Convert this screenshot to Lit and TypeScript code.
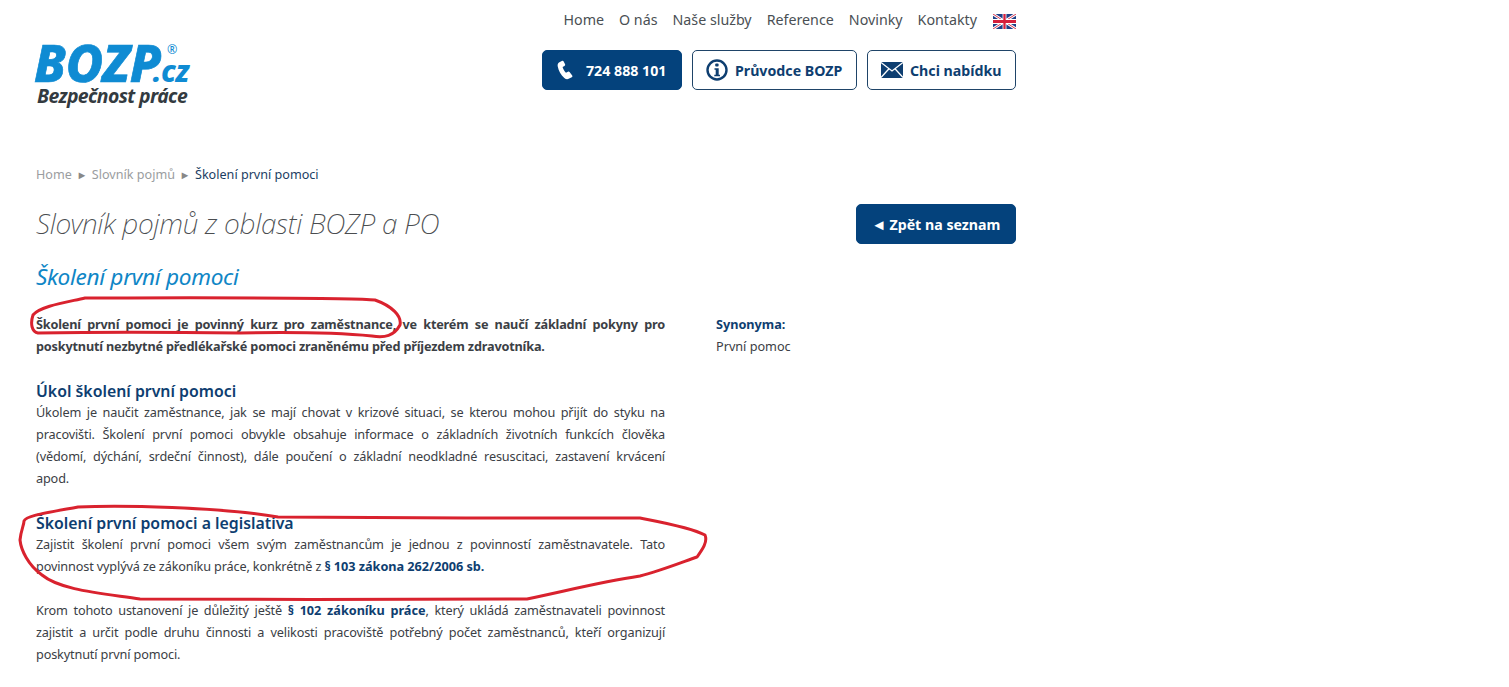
import { LitElement, html, css } from "lit";
import { customElement } from "lit/decorators.js";

@customElement("app-root")
export class AppRoot extends LitElement {
  static styles = css`
    :host { display: block; position: relative; height: 687px; overflow: hidden; background: #fff; font-family: "Noto Sans", sans-serif; color: #333a40; }
    a { color: inherit; text-decoration: none; }
    .page { width: 980px; margin-left: 36px; display: flex; flex-direction: column; }
    header { display: flex; justify-content: space-between; height: 146px; }
    .logo { display: flex; flex-direction: column; margin-top: 41px; width: 160px; }
    .brand { display: flex; align-items: baseline; color: #0f8bd3; font-style: italic; font-weight: 800; line-height: 42px; height: 42px; position: relative; white-space: nowrap; margin-left: -2px; }
    .brand b { font-size: 51px; font-weight: 800; letter-spacing: -0.2px; -webkit-text-stroke: 0.7px #0f8bd3; }
    .brand i { font-size: 30px; letter-spacing: -0.6px; margin-left: -8px; }
    .brand sup { position: absolute; left: 133px; top: 2px; font-size: 12.5px; line-height: 14px; font-weight: 400; font-style: normal; }
    .tag { font-size: 19.4px; line-height: 22px; font-style: italic; font-weight: 700; color: #333a40; letter-spacing: -0.6px; margin: 2px 0 0 1px; white-space: nowrap; }
    .hright { display: flex; flex-direction: column; align-items: flex-end; }
    nav { display: flex; align-items: center; height: 40px; gap: 15px; font-size: 14.25px; color: #4a4f54; }
    nav a { position: relative; top: -1px; }
    .flag { width: 23px; height: 15px; display: block; margin-left: 1px; margin-top: 3px; }
    .btns { display: flex; gap: 10px; margin-top: 10px; }
    .btn { box-sizing: border-box; height: 40px; border-radius: 5px; border: 1px solid #1f4468; display: flex; align-items: center; font-weight: 700; font-size: 14.2px; color: #0e3e70; white-space: nowrap; }
    .btn.solid { background: #04427c; border-color: #04427c; color: #fff; }
    .b1 { width: 140px; padding-left: 13px; gap: 9px; }
    .b2 { width: 165px; padding-left: 13px; gap: 7px; }
    .b3 { width: 149px; padding-left: 13px; gap: 7px; }
    .crumbs { display: flex; align-items: center; height: 22px; margin-top: 17px; font-size: 12.6px; color: #9a9da0; }
    .crumbs .sep { width: 20px; text-align: center; font-size: 11px; color: #888; }
    .crumbs .cur { color: #1b3d63; }
    .titlebar { display: flex; justify-content: space-between; align-items: center; margin-top: 19px; height: 40px; }
    h1 { margin: -2px 0 0; font-size: 28px; font-weight: 200; font-style: italic; color: #4a4d50; letter-spacing: -0.3px; }
    .back { width: 160px; justify-content: center; gap: 3px; }
    .back .arrow { font-size: 15px; }
    h2 { margin: 13px 0 0; font-size: 22.6px; line-height: 40px; font-weight: 400; font-style: italic; color: #0f86c6; letter-spacing: -0.3px; }
    .cols { display: flex; margin-top: 16px; }
    .main { width: 629px; flex: none; font-size: 12.7px; line-height: 22px; color: #3b4045; letter-spacing: -0.15px; }
    .side { margin-left: 51px; font-size: 12.7px; line-height: 22px; color: #3b4045; letter-spacing: -0.02px; }
    .side strong { display: block; color: #0e3e70; }
    .l { display: block; text-align: justify; text-align-last: justify; }
    .l.end { text-align-last: left; }
    .lead { font-weight: 700; letter-spacing: -0.18px; }
    h3 { margin: 0; padding-top: 1px; font-size: 15.85px; line-height: 20px; font-weight: 600; color: #0e3e70; letter-spacing: 0; }
    .sec { margin-top: 23px; }
    .sec.plain { margin-top: 22px; }
    strong.k { color: #0e3e70; letter-spacing: -0.03px; }
    .marks { position: absolute; left: 0; top: 0; pointer-events: none; }
  `;
  render() {
    return html`
      <div class="page">
        <header>
          <div class="logo">
            <div class="brand"><b>BOZP</b><i>.cz</i><sup>®</sup></div>
            <div class="tag">Bezpečnost práce</div>
          </div>
          <div class="hright">
            <nav>
              <a>Home</a><a>O nás</a><a>Naše služby</a><a>Reference</a><a>Novinky</a><a>Kontakty</a>
              <svg class="flag" viewBox="0 0 60 30" preserveAspectRatio="none">
                <rect width="60" height="30" fill="#1d3f87"/>
                <path d="M0 0L60 30M60 0L0 30" stroke="#fff" stroke-width="6"/>
                <path d="M0 0L60 30M60 0L0 30" stroke="#d5203c" stroke-width="2"/>
                <path d="M30 0V30M0 15H60" stroke="#fff" stroke-width="10"/>
                <path d="M30 0V30M0 15H60" stroke="#d5203c" stroke-width="6"/>
              </svg>
            </nav>
            <div class="btns">
              <a class="btn solid b1">
                <svg width="21" height="22" viewBox="0 0 24 24" fill="#fff"><path d="M6.600 1.600 3.400 3.300C2 4.200 1.600 6 2 8c1 5 3.500 9.400 7.500 13 1.500 1.400 3.400 1.900 5 1.100l3.500-1.900c.8-.5 1-1.300.5-2l-3-3.900c-.5-.6-1.200-.8-1.900-.4l-2.200 1.300c-1.900-1.800-3.200-4-3.900-6.500l2.200-1.300c.7-.4.900-1.100.7-1.900L8.600 2.100c-.3-.7-1.200-.9-2-.5z"/></svg>
                <span>724 888 101</span>
              </a>
              <a class="btn b2">
                <svg width="22" height="22" viewBox="0 0 22 22"><circle cx="11" cy="11" r="9.500" fill="none" stroke="#0e3e70" stroke-width="2.400"/><rect x="9.200" y="4.600" width="3.400" height="3" rx="1" fill="#0e3e70"/><path d="M8.500 9.200h4.200v6.500h1.300v1.500H8.300v-1.500h1.400v-5H8.500z" fill="#0e3e70"/></svg>
                <span>Průvodce BOZP</span>
              </a>
              <a class="btn b3">
                <svg width="22" height="16" viewBox="0 0 22 16"><rect width="22" height="16" fill="#0e3e70"/><path d="M0 .5 11 9 22 .5M0 15.500 8 6.800M22 15.500 14 6.800" fill="none" stroke="#fff" stroke-width="1.300"/></svg>
                <span>Chci nabídku</span>
              </a>
            </div>
          </div>
        </header>

        <div class="crumbs"><span>Home</span><span class="sep">►</span><span>Slovník pojmů</span><span class="sep">►</span><span class="cur">Školení první pomoci</span></div>

        <div class="titlebar">
          <h1>Slovník pojmů z oblasti BOZP a PO</h1>
          <a class="btn solid back"><span class="arrow">◄</span><span>Zpět na seznam</span></a>
        </div>

        <h2>Školení první pomoci</h2>

        <div class="cols">
          <div class="main">
            <div class="lead">
              <span class="l">Školení první pomoci je povinný kurz pro zaměstnance, ve kterém se naučí základní pokyny pro</span>
              <span class="l end">poskytnutí nezbytné předlékařské pomoci zraněnému před příjezdem zdravotníka.</span>
            </div>
            <section class="sec">
              <h3>Úkol školení první pomoci</h3>
              <span class="l">Úkolem je naučit zaměstnance, jak se mají chovat v krizové situaci, se kterou mohou přijít do styku na</span>
              <span class="l">pracovišti. Školení první pomoci obvykle obsahuje informace o základních životních funkcích člověka</span>
              <span class="l">(vědomí, dýchání, srdeční činnost), dále poučení o základní neodkladné resuscitaci, zastavení krvácení</span>
              <span class="l end">apod.</span>
            </section>
            <section class="sec">
              <h3>Školení první pomoci a legislativa</h3>
              <span class="l">Zajistit školení první pomoci všem svým zaměstnancům je jednou z povinností zaměstnavatele. Tato</span>
              <span class="l end">povinnost vyplývá ze zákoníku práce, konkrétně z <strong class="k">§ 103 zákona 262/2006 sb.</strong></span>
            </section>
            <section class="sec plain">
              <span class="l">Krom tohoto ustanovení je důležitý ještě <strong class="k">§ 102 zákoníku práce</strong>, který ukládá zaměstnavateli povinnost</span>
              <span class="l">zajistit a určit podle druhu činnosti a velikosti pracoviště potřebný počet zaměstnanců, kteří organizují</span>
              <span class="l end">poskytnutí první pomoci.</span>
            </section>
          </div>
          <aside class="side"><strong>Synonyma:</strong><span>První pomoc</span></aside>
        </div>
      </div>
      <svg class="marks" width="1509" height="687" fill="none" stroke="#d9222e" stroke-width="3" stroke-linecap="round" stroke-linejoin="round">
        <path d="M85 298 C68 302 40 306 33 315 C30 324 32 332 38 333 C90 332 170 332 240 333 C290 332 340 333 372 336 C385 338 394 336 400 325 C402 316 392 306 375 300 C350 297 150 298 85 298 Z"/>
        <path d="M24 521 C26 516 40 514 78 507 C120 505 220 507 278 517 C340 518 560 518 640 518 C660 522 690 527 705 535 C708 542 702 550 697 557 C680 563 660 571 640 576 C600 582 570 590 527 599 C450 599 250 600 140 599 C100 593 60 590 42 575 C28 565 21 550 20 540 C21 530 24 525 24 521 Z"/>
      </svg>
    `;
  }
}
